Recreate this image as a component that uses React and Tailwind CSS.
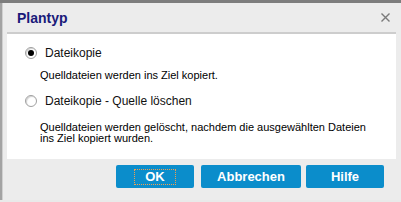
import React from "react";

const Radio = ({ checked }) => (
  <span className="flex h-[12px] w-[12px] shrink-0 items-center justify-center rounded-full border border-[#a0a0a0] bg-white shadow-[inset_1px_1px_1px_rgba(0,0,0,0.18)]">
    {checked && <span className="h-[6px] w-[6px] rounded-full bg-black" />}
  </span>
);

const Btn = ({ children, focus, w }) => (
  <button
    type="button"
    className={`flex h-[23px] items-center justify-center rounded-[2px] bg-[#0b8dcb] text-[13px] font-bold text-white ${w}`}
  >
    {focus ? (
      <span className="border border-dotted border-[#f0a050] px-[10px] py-[1px] leading-[12px]">{children}</span>
    ) : (
      children
    )}
  </button>
);

export default function App() {
  return (
    <div
      className="flex h-[202px] w-[401px] flex-col overflow-hidden bg-[#e9e9e9]"
      style={{ fontFamily: "'Liberation Sans', Arial, sans-serif" }}
    >
      <div className="h-[3px] shrink-0 bg-[#7d7d7d]" />
      <div className="flex h-[197px] shrink-0">
        <div className="w-[2px] shrink-0 bg-[#a3a3a3]" />
        <div className="flex flex-1 flex-col border-l border-[#d0d0d0] bg-[#ececec]">
          <div className="flex h-[29px] shrink-0 items-center justify-between pl-[14px] pr-[11px]">
            <span className="pt-[1px] text-[14px] font-bold text-[#1a1a7a]">Plantyp</span>
            <svg width="9" height="9" viewBox="0 0 9 9" className="mt-[-1px]">
              <path d="M0.5 0.5 L8.5 8.5 M8.5 0.5 L0.5 8.5" stroke="#7a7a7a" strokeWidth="1.4" />
            </svg>
          </div>
          <div className="ml-[4px] mr-[5px] flex h-[127px] shrink-0 flex-col border-t-2 border-[#cdcdcd] bg-white pl-[18px] pt-[12px] text-black">
            <div className="flex h-[14px] items-center gap-[8px]">
              <Radio checked />
              <span className="text-[12px] text-[#111]">Dateikopie</span>
            </div>
            <div className="mt-[10px] whitespace-nowrap pl-[15px] text-[11px] leading-[11px]">
              Quelldateien werden ins Ziel kopiert.
            </div>
            <div className="mt-[13px] flex h-[14px] items-center gap-[8px]">
              <Radio />
              <span className="text-[12px] text-[#111]">Dateikopie - Quelle löschen</span>
            </div>
            <div className="mt-[14px] whitespace-nowrap pl-[15px] text-[11px] leading-[11px]">
              Quelldateien werden gelöscht, nachdem die ausgewählten Dateien
              <br />
              ins Ziel kopiert wurden.
            </div>
          </div>
          <div className="mt-[6px] flex justify-end pr-[17px]">
            <Btn focus w="w-[78px]">OK</Btn>
            <div className="ml-[7px]">
              <Btn w="w-[100px]">Abbrechen</Btn>
            </div>
            <div className="ml-[5px]">
              <Btn w="w-[78px]">Hilfe</Btn>
            </div>
          </div>
        </div>
      </div>
    </div>
  );
}
